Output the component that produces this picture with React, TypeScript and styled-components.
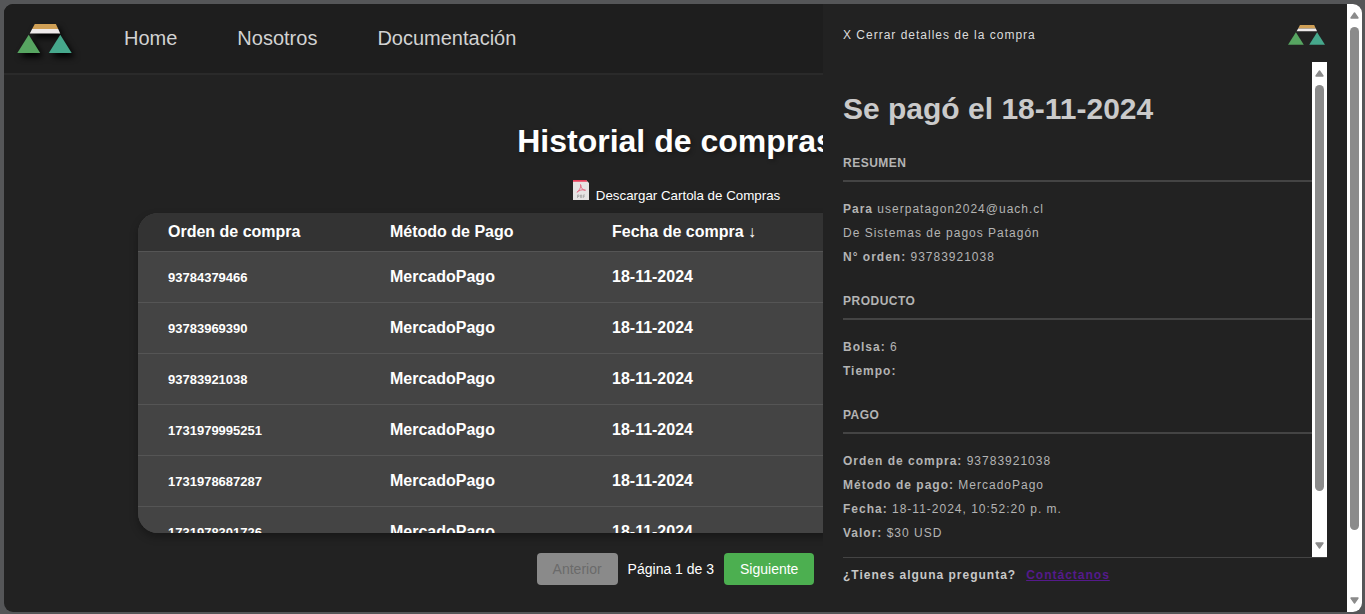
import React from "react";
import styled, { createGlobalStyle } from "styled-components";

const GlobalStyle = createGlobalStyle`
  * { box-sizing: border-box; }
  body {
    margin: 0;
    background: #555658;
    font-family: "Liberation Sans", Arial, sans-serif;
    color: #fff;
    overflow: hidden;
  }
`;

const Window = styled.div`
  display: flex;
  width: 1358px;
  height: 608px;
  margin: 4px 3px 2px 4px;
  border-radius: 9px;
  overflow: hidden;
  background: #222;
`;

const Page = styled.div`
  position: relative;
  flex: 1;
  min-width: 0;
  height: 100%;
  overflow: hidden;
`;

const Header = styled.header`
  display: flex;
  align-items: center;
  height: 71px;
  padding: 0 0 0 13px;
  background: #1e1e1e;
  border-bottom: 2px solid #2a2a2a;
`;

const HeaderLogo = styled.div`
  display: flex;
  width: 107px;
  filter: drop-shadow(3px 4px 3px #000);
`;

const Nav = styled.nav`
  display: flex;
  gap: 60px;
  padding-bottom: 2px;
`;

const NavLink = styled.a`
  font-size: 20px;
  line-height: 24px;
  color: #d2d2d2;
`;

const Main = styled.main`
  display: flex;
  flex-direction: column;
  align-items: center;
  padding-top: 48px;
`;

const Title = styled.h1`
  margin: 0;
  font-size: 32px;
  line-height: 37px;
  text-shadow: 2px 2px 4px rgba(0, 0, 0, 0.3);
`;

const Download = styled.button`
  display: flex;
  align-items: flex-start;
  gap: 7px;
  margin-top: 20px;
  padding: 0 0 0 2px;
  border: 0;
  background: none;
  color: #fff;
  font-family: inherit;
  font-size: 13.333px;
  line-height: 16px;

  span { margin-top: 8px; }
`;

const Table = styled.div`
  width: 1075px;
  height: 320px;
  margin-top: 9px;
  border-radius: 20px;
  overflow: hidden;
  background: #444;
  box-shadow: 0 4px 8px rgba(0, 0, 0, 0.3);
`;

const Row = styled.div<{ $head?: boolean }>`
  display: grid;
  grid-template-columns: repeat(4, 222px);
  align-items: center;
  height: ${(p) => (p.$head ? 39 : 51)}px;
  padding-left: 30px;
  background: ${(p) => (p.$head ? "#333" : "#444")};
  border-bottom: 1px solid #555;
  font-size: 16px;
  font-weight: bold;
`;

const OrderId = styled.span`
  font-size: 13px;
`;

const Pager = styled.div`
  display: flex;
  align-items: center;
  gap: 10px;
  margin-top: 20px;
  font-size: 14px;
`;

const PagerButton = styled.button<{ $disabled?: boolean }>`
  height: 32px;
  padding: 0 16px;
  border: 0;
  border-radius: 4px;
  font-family: inherit;
  font-size: 14px;
  color: ${(p) => (p.$disabled ? "#6a6a6a" : "#fff")};
  background: ${(p) => (p.$disabled ? "#8a8a8a" : "#4caf50")};
`;

const Drawer = styled.aside`
  position: absolute;
  top: 0;
  right: 0;
  display: flex;
  flex-direction: column;
  width: 524px;
  height: 100%;
  padding: 0 20px;
  background: #222;
  font-size: 12px;
  letter-spacing: 1px;
  color: #b4b4b4;
`;

const DrawerTop = styled.div`
  display: flex;
  align-items: flex-start;
  justify-content: space-between;
  height: 58px;
  padding: 21px 2px 0 0;
`;

const CloseLabel = styled.button`
  padding: 2px 0 0;
  border: 0;
  background: none;
  font: 12px/16px "Liberation Sans", Arial, sans-serif;
  letter-spacing: 1px;
  color: #dcdcdc;
`;

const DrawerBody = styled.div`
  display: flex;
  height: 495px;
`;

const Details = styled.div`
  flex: 1;
  padding-top: 29px;
`;

const PaidTitle = styled.h2`
  margin: 0 0 24px;
  font-size: 30px;
  line-height: 35px;
  letter-spacing: 0;
  color: #cacaca;
`;

const Section = styled.section`
  margin-bottom: 19px;
`;

const SectionTitle = styled.h3`
  margin: 0 0 15px;
  padding: 1px 0 4px;
  border-bottom: 2px solid #444;
  font-size: 12px;
  line-height: 25px;
  letter-spacing: 0.5px;
  color: #b4b4b4;
`;

const Line = styled.p`
  margin: 0;
  line-height: 24px;
`;

const DrawerFooter = styled.div`
  display: flex;
  gap: 10px;
  padding-top: 9px;
  border-top: 1px solid #444;
  font-weight: bold;
  line-height: 16px;
  color: #c8c8c8;
`;

const Contact = styled.a`
  color: #551a8b;
  text-decoration: underline;
`;

const Track = styled.div`
  display: flex;
  flex-direction: column;
  align-items: center;
  flex: none;
  width: 15px;
  height: 100%;
  padding: 8px 0;
  background: #fff;
`;

const Thumb = styled.div<{ $length: number }>`
  width: 9px;
  height: ${(p) => p.$length}px;
  margin: 8px 0 auto;
  border-radius: 5px;
  background: #8b8b8b;
`;

const Arrow = ({ down }: { down?: boolean }) => (
  <svg width="9" height="7" viewBox="0 0 9 7">
    <path
      d="M4.5 1 L8 6 H1 Z"
      transform={down ? "rotate(180 4.5 3.5)" : undefined}
      fill="#8b8b8b"
      stroke="#8b8b8b"
      strokeWidth="1.4"
      strokeLinejoin="round"
    />
  </svg>
);

const Scrollbar = ({ length }: { length: number }) => (
  <Track>
    <Arrow />
    <Thumb $length={length} />
    <Arrow down />
  </Track>
);

const Logo = ({ width }: { width: number }) => (
  <svg width={width} height={(width * 88) / 164} viewBox="0 0 164 88">
    <path d="M53 0 H116 L123 15 H45 Z" fill="#cf9f55" />
    <path d="M45 15 H123 L129 28 H38 Z" fill="#eeeaea" />
    <path d="M35 32 L70 88 H0 Z" fill="#57a561" />
    <path d="M129 32 L164 88 H94 Z" fill="#46a88c" />
  </svg>
);

const PdfIcon = () => (
  <svg width="16" height="20" viewBox="0 0 16 20">
    <path d="M0 0 H13 L16 3 V20 H0 Z" fill="#e6e4e4" />
    <path d="M0 0 H13 L14.5 1.8 H0 Z" fill="#e8405c" />
    <path
      d="M7.5 4.5 C8.6 6.5 6.5 10 4 12.3 C5.8 10.3 9.5 9 12.5 10.2 C10 10.5 7.8 8 7.5 4.5"
      fill="none"
      stroke="#e2607a"
      strokeWidth="0.9"
    />
    <path
      d="M4.5 18 V15 H6 V16.5 H4.5 M7.5 15 H8.6 V17.6 H7.5 Z M10.3 18 V15 H12 M10.3 16.5 H11.6"
      fill="none"
      stroke="#a5a5a5"
      strokeWidth="0.8"
    />
  </svg>
);

const orders = [
  "93784379466",
  "93783969390",
  "93783921038",
  "1731979995251",
  "1731978687287",
  "1731978301726",
];

export default function App() {
  return (
    <>
      <GlobalStyle />
      <Window>
        <Page>
          <Header>
            <HeaderLogo>
              <Logo width={55} />
            </HeaderLogo>
            <Nav>
              <NavLink>Home</NavLink>
              <NavLink>Nosotros</NavLink>
              <NavLink>Documentación</NavLink>
            </Nav>
          </Header>
          <Main>
            <Title>Historial de compras</Title>
            <Download>
              <PdfIcon />
              <span>Descargar Cartola de Compras</span>
            </Download>
            <Table>
              <Row $head>
                <span>Orden de compra</span>
                <span>Método de Pago</span>
                <span>Fecha de compra ↓</span>
              </Row>
              {orders.map((id) => (
                <Row key={id}>
                  <OrderId>{id}</OrderId>
                  <span>MercadoPago</span>
                  <span>18-11-2024</span>
                </Row>
              ))}
            </Table>
            <Pager>
              <PagerButton $disabled>Anterior</PagerButton>
              <span>Página 1 de 3</span>
              <PagerButton>Siguiente</PagerButton>
            </Pager>
          </Main>
          <Drawer>
            <DrawerTop>
              <CloseLabel>X Cerrar detalles de la compra</CloseLabel>
              <Logo width={37} />
            </DrawerTop>
            <DrawerBody>
              <Details>
                <PaidTitle>Se pagó el 18-11-2024</PaidTitle>
                <Section>
                  <SectionTitle>RESUMEN</SectionTitle>
                  <Line><b>Para</b> userpatagon2024@uach.cl</Line>
                  <Line>De Sistemas de pagos Patagón</Line>
                  <Line><b>N° orden:</b> 93783921038</Line>
                </Section>
                <Section>
                  <SectionTitle>PRODUCTO</SectionTitle>
                  <Line><b>Bolsa:</b> 6</Line>
                  <Line><b>Tiempo:</b></Line>
                </Section>
                <Section>
                  <SectionTitle>PAGO</SectionTitle>
                  <Line><b>Orden de compra:</b> 93783921038</Line>
                  <Line><b>Método de pago:</b> MercadoPago</Line>
                  <Line><b>Fecha:</b> 18-11-2024, 10:52:20 p. m.</Line>
                  <Line><b>Valor:</b> $30 USD</Line>
                </Section>
              </Details>
              <Scrollbar length={406} />
            </DrawerBody>
            <DrawerFooter>
              <span>¿Tienes alguna pregunta?</span>
              <Contact>Contáctanos</Contact>
            </DrawerFooter>
          </Drawer>
        </Page>
        <Scrollbar length={503} />
      </Window>
    </>
  );
}
